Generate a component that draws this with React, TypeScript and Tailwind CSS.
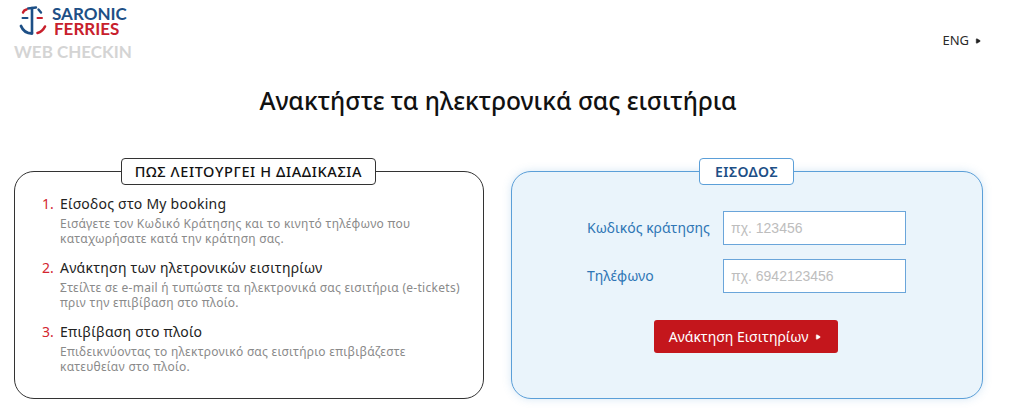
import { Play } from "lucide-react";

const STEPS = [
  {
    title: "Είσοδος στο My booking",
    lines: ["Εισάγετε τον Κωδικό Κράτησης και το κινητό τηλέφωνο που", "καταχωρήσατε κατά την κράτηση σας."],
  },
  {
    title: "Ανάκτηση των ηλετρονικών εισιτηρίων",
    lines: ["Στείλτε σε e-mail ή τυπώστε τα ηλεκτρονικά σας εισιτήρια (e-tickets)", "πριν την επιβίβαση στο πλοίο."],
  },
  {
    title: "Επιβίβαση στο πλοίο",
    lines: ["Επιδεικνύοντας το ηλεκτρονικό σας εισιτήριο επιβιβάζεστε", "κατευθείαν στο πλοίο."],
  },
];

function Logo() {
  return (
    <svg width="30" height="30" viewBox="0 0 30 30" fill="none" strokeLinecap="round">
      <path d="M10 3.5L18 2.5" stroke="#1d4f86" strokeWidth="2.4" />
      <path d="M20.5 4.5L23 7.5" stroke="#1d4f86" strokeWidth="2.4" />
      <path d="M14 3V27.5" stroke="#1d4f86" strokeWidth="2.6" />
      <path d="M3 21C5 26 9 28.5 14 28.5" stroke="#1d4f86" strokeWidth="2.8" />
      <path d="M5 7.5C5.5 6 7 4.8 8.5 4.5" stroke="#c8202c" strokeWidth="2.4" />
      <path d="M4.5 13H9.5" stroke="#1d4f86" strokeWidth="2" />
      <path d="M19.5 13H24" stroke="#c8202c" strokeWidth="2" />
      <path d="M19.5 28C23 27 25.5 24.5 27 21.5" stroke="#c8202c" strokeWidth="2.6" />
    </svg>
  );
}

function FormRow({ label, placeholder }: { label: string; placeholder: string }) {
  return (
    <div className="flex items-center">
      <label className="w-[136px] pb-[2px] text-[14px] text-[#2f76b5]">{label}</label>
      <input
        placeholder={placeholder}
        className="h-[34px] w-[183px] border-[1.5px] border-[#6aa5da] bg-white px-[7px] font-['Liberation_Sans',sans-serif] text-[14px] placeholder:text-[#bdbdbd]"
      />
    </div>
  );
}

export default function App() {
  return (
    <div className="h-[408px] w-[1024px] overflow-hidden bg-white font-['Noto_Sans',sans-serif]">
      <header className="flex h-[62px] items-start justify-between pl-[14px] pr-[43px]">
        <div className="pt-[5px]">
          <div className="flex items-start gap-[4px] pl-[4px]">
            <Logo />
            <div className="pt-[1px] font-['Lato',sans-serif] text-[17px] font-bold leading-[15px]">
              <div className="text-[#1d4f86]">SARONIC</div>
              <div className="pl-[2px] text-[#c8202c]">FERRIES</div>
            </div>
          </div>
          <div className="mt-[7px] font-['Lato',sans-serif] text-[17px] font-bold leading-[18px] text-[#d4d4d4]">
            WEB CHECKIN
          </div>
        </div>
        <div className="flex items-center gap-[6px] pt-[31px] text-[13px] text-[#2b2b2b]">
          ENG
          <Play className="size-[6px] fill-[#222] text-[#222]" />
        </div>
      </header>

      <h1 className="mt-[21px] w-[996px] text-center text-[24.6px] font-medium leading-[36px] text-[#111]">
        Ανακτήστε τα ηλεκτρονικά σας εισιτήρια
      </h1>

      <main className="mt-[52px] flex gap-[27px] pl-[14px]">
        <section className="relative h-[228px] w-[470px] rounded-[20px] border border-[#333] bg-white pl-[27px] pt-[22px]">
          <h2 className="absolute left-[106px] top-[-14px] flex h-[27px] w-[255px] items-center justify-center rounded-[4px] border border-[#333] bg-white text-[14.5px] font-medium tracking-[0.6px] text-[#111]">
            ΠΩΣ ΛΕΙΤΟΥΡΓΕΙ Η ΔΙΑΔΙΚΑΣΙΑ
          </h2>
          <ol className="flex flex-col gap-[12px]">
            {STEPS.map((step, index) => (
              <li key={step.title} className="flex">
                <span className="w-[18px] text-[14px] leading-[20px] text-[#d3262f]">{index + 1}.</span>
                <div>
                  <h3 className="text-[14px] leading-[20px] tracking-[0.25px] text-[#222]">{step.title}</h3>
                  <p className="mt-[2px] text-[12px] leading-[15px] tracking-[0.28px] text-[#8a8a8a]">
                    {step.lines[0]}
                    <br />
                    {step.lines[1]}
                  </p>
                </div>
              </li>
            ))}
          </ol>
        </section>

        <section className="relative h-[228px] w-[472px] rounded-[20px] border border-[#5b9fd8] bg-[#eaf4fb] shadow-[0_0_8px_rgba(91,159,216,0.25)]">
          <h2 className="absolute left-[187px] top-[-14px] flex h-[27px] w-[95px] items-center justify-center rounded-[4px] border border-[#5b9fd8] bg-white text-[14px] font-semibold tracking-[0.5px] text-[#1d4f86]">
            ΕΙΣΟΔΟΣ
          </h2>
          <div className="flex flex-col gap-[14px] pl-[75px] pt-[39px]">
            <FormRow label="Κωδικός κράτησης" placeholder="πχ. 123456" />
            <FormRow label="Τηλέφωνο" placeholder="πχ. 6942123456" />
          </div>
          <div className="mt-[27px] flex pl-[142px]">
            <button className="flex h-[33px] w-[184px] items-center justify-center gap-[7px] rounded-[3px] bg-[#c4161c] pr-[2px] text-[14px] text-white">
              Ανάκτηση Εισιτηρίων
              <Play className="size-[6px] fill-white text-white" />
            </button>
          </div>
        </section>
      </main>
    </div>
  );
}
